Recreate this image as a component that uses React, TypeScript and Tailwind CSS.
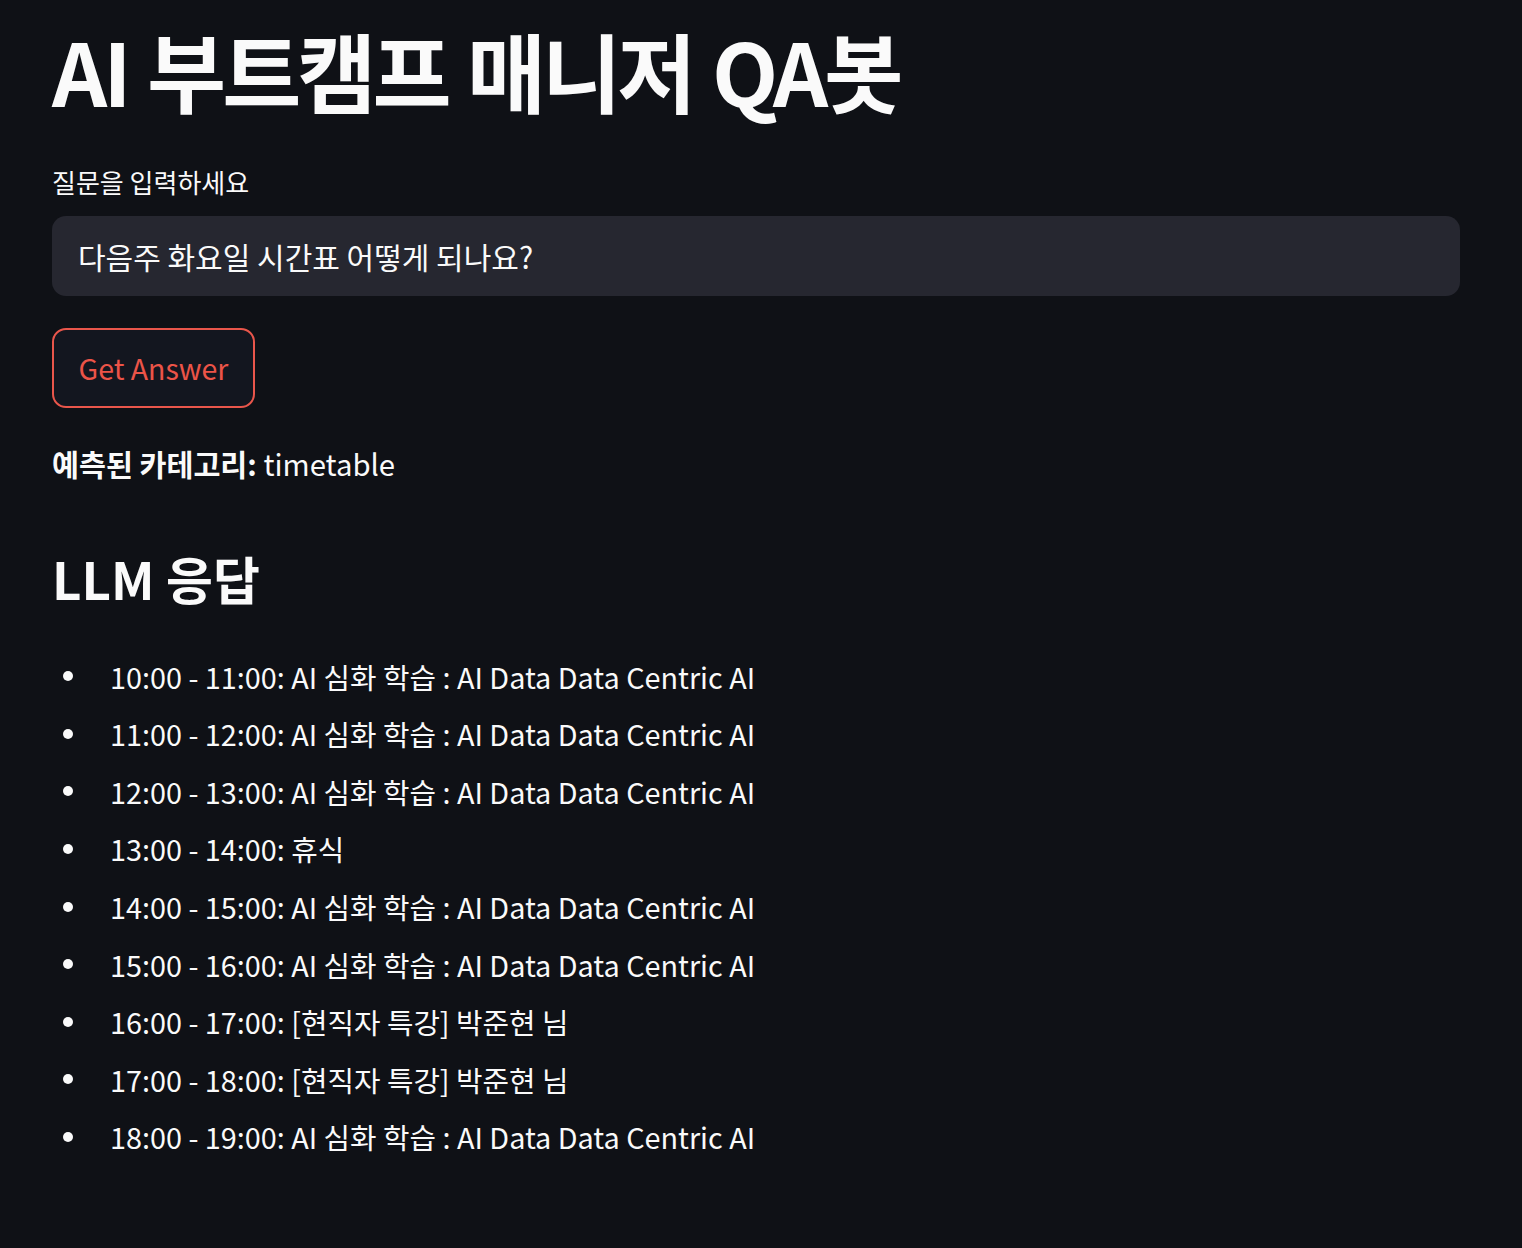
import React from "react";

const items = [
  "10:00 - 11:00: AI 심화 학습 : AI Data Data Centric AI",
  "11:00 - 12:00: AI 심화 학습 : AI Data Data Centric AI",
  "12:00 - 13:00: AI 심화 학습 : AI Data Data Centric AI",
  "13:00 - 14:00: 휴식",
  "14:00 - 15:00: AI 심화 학습 : AI Data Data Centric AI",
  "15:00 - 16:00: AI 심화 학습 : AI Data Data Centric AI",
  "16:00 - 17:00: [현직자 특강] 박준현 님",
  "17:00 - 18:00: [현직자 특강] 박준현 님",
  "18:00 - 19:00: AI 심화 학습 : AI Data Data Centric AI",
];

export default function App() {
  return (
    <div
      className="min-h-[1248px] w-full bg-[#0f1116] text-[#fafafa]"
      style={{ fontFamily: '"Noto Sans CJK KR", "Noto Sans", sans-serif' }}
    >
      <div className="pl-[52px] pr-[62px] pt-[18px]">
        <h1 className="text-[86px] font-bold leading-[1.2] tracking-[-4px] [word-spacing:4px]">AI 부트캠프 매니저 QA봇</h1>
        <div className="mt-[43px] text-[26px] leading-[36px]">질문을 입력하세요</div>
        <div className="mt-[16px] flex h-[80px] items-center rounded-[14px] bg-[#262730] px-[26px] text-[30px]">
          다음주 화요일 시간표 어떻게 되나요?
        </div>
        <button className="mt-[32px] flex h-[80px] w-[203px] items-center justify-center rounded-[14px] border-2 border-[#e9564b] bg-[#13161f] text-[28.5px] text-[#ec5448]">
          Get Answer
        </button>
        <div className="mt-[34px] text-[29.3px] leading-[42px]">
          <span className="font-bold">예측된 카테고리:</span> timetable
        </div>
        <h2 className="mt-[64px] text-[51px] font-bold leading-[1.2]">LLM 응답</h2>
        <ul className="mt-[38px] text-[28.8px]">
          {items.map((t, i) => (
            <li key={i} className="flex h-[57.6px] items-center">
              <span className="flex w-[58px] justify-start pl-[11px]">
                <span className="block h-[10px] w-[10px] rounded-full bg-[#fafafa]" />
              </span>
              <span>{t}</span>
            </li>
          ))}
        </ul>
      </div>
    </div>
  );
}
